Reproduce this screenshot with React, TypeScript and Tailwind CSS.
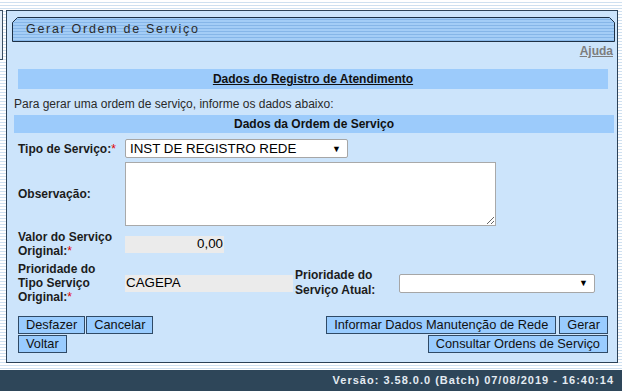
const Req = () => <span className="font-normal text-[#e00000]">*</span>;

const Btn = ({ children }: { children: React.ReactNode }) => (
  <button className="h-[18px] border border-[#2f4a66] bg-[#99ccff] px-[7px] text-[12.8px] leading-[16px] text-[#111]">
    {children}
  </button>
);

function TabTitle({ title }: { title: string }) {
  return (
    <div className="relative ml-[5px] mr-[2px] mt-[6px] h-[25px]">
      <svg className="absolute inset-0" width="603" height="25" viewBox="0 0 603 25">
        <defs>
          <pattern id="tabStripes" width="4" height="3" patternUnits="userSpaceOnUse">
            <rect width="4" height="3" fill="#a4cdf6" />
            <rect y="2" width="4" height="1" fill="#86b6e8" />
          </pattern>
        </defs>
        <polygon
          points="0.5,5.5 5.5,0.5 597.5,0.5 602.5,5.5 602.5,24.5 0.5,24.5"
          fill="url(#tabStripes)"
          stroke="#1d3045"
          strokeWidth="1"
        />
      </svg>
      <span className="relative block pl-[14px] pt-[4px] text-[12.5px] leading-[16px] tracking-[1.7px] text-[#2b2b2b]">
        {title}
      </span>
    </div>
  );
}

export default function App() {
  return (
    <div className="flex h-[391px] w-[622px] flex-col overflow-hidden bg-[repeating-linear-gradient(to_bottom,#ffffff_0px,#ffffff_2px,#cfe0f0_2px,#cfe0f0_3px)] font-['Liberation_Sans',Arial,sans-serif]">
      <div className="flex flex-1 items-start pt-[10px]">
        <div className="h-[50px] w-[3px] border-y border-r border-[#3b4f63] bg-[#e4eef8]" />
        <div className="ml-[3px] flex h-[353px] w-[612px] flex-col border border-[#2c4156] bg-[#cce4fb]">
          <TabTitle title="Gerar Ordem de Serviço" />

          <div className="mt-[2px] pr-[4px] text-right text-[12px] font-bold leading-[14px]">
            <span className="text-[#7d7d7d] underline">Ajuda</span>
          </div>

          <div className="ml-[11px] mr-[9px] mt-[11px] flex h-[20px] items-center justify-center bg-[#9ccbfb] text-[12px] font-bold text-[#111]">
            <span className="underline">Dados do Registro de Atendimento</span>
          </div>

          <p className="ml-[7px] mt-[8px] text-[12px] leading-[14px] text-[#2a2a2a]">
            Para gerar uma ordem de serviço, informe os dados abaixo:
          </p>

          <div className="ml-[7px] mr-[3px] mt-[4px] flex h-[18px] items-center justify-center bg-[#9ccbfb] text-[12px] font-bold text-[#111]">
            Dados da Ordem de Serviço
          </div>

          <div className="flex flex-col gap-[4px] pl-[11px] pt-[6px] text-[12px] font-bold leading-[14px] text-[#1c1c1c]">
            <div className="flex h-[19px] items-center">
              <span className="w-[107px]">
                Tipo de Serviço:<Req />
              </span>
              <div className="flex h-[19px] w-[223px] items-center justify-between rounded-[2px] border border-[#a6a6a6] bg-white pl-[4px] pr-[6px] text-[13.33px] font-normal text-black">
                <span>INST DE REGISTRO REDE</span>
                <span className="text-[9px]">▼</span>
              </div>
            </div>

            <div className="flex h-[64px] items-center">
              <span className="w-[107px]">Observação:</span>
              <textarea
                readOnly
                className="h-[64px] w-[371px] border border-[#a9a9a9] bg-white"
              />
            </div>

            <div className="flex h-[28px] items-center">
              <span className="w-[107px]">
                Valor do Serviço
                <br />
                Original:<Req />
              </span>
              <div className="flex h-[17px] w-[99px] items-center justify-end bg-[#ebebeb] pr-[1px] text-[13.33px] font-normal text-black">
                0,00
              </div>
            </div>

            <div className="flex h-[42px] items-center">
              <span className="w-[107px]">
                Prioridade do
                <br />
                Tipo Serviço
                <br />
                Original:<Req />
              </span>
              <div className="flex h-[17px] w-[168px] items-center bg-[#ebebeb] pl-[1px] text-[13.33px] font-normal text-black">
                CAGEPA
              </div>
              <span className="ml-[2px] w-[104px] leading-[15px]">
                Prioridade do
                <br />
                Serviço Atual:
              </span>
              <div className="flex h-[19px] w-[196px] items-center justify-end rounded-[2px] border border-[#a6a6a6] bg-white pr-[6px] text-[9px] font-normal text-black">
                ▼
              </div>
            </div>
          </div>

          <div className="mt-[12px] flex justify-between pl-[11px] pr-[9px]">
            <div className="flex flex-col gap-[1px]">
              <div className="flex gap-[1px]">
                <Btn>Desfazer</Btn>
                <Btn>Cancelar</Btn>
              </div>
              <div className="flex">
                <Btn>Voltar</Btn>
              </div>
            </div>
            <div className="flex flex-col items-end gap-[1px]">
              <div className="flex gap-[3px]">
                <Btn>Informar Dados Manutenção de Rede</Btn>
                <Btn>Gerar</Btn>
              </div>
              <Btn>Consultar Ordens de Serviço</Btn>
            </div>
          </div>
        </div>
      </div>

      <div className="flex h-[21px] items-center justify-end bg-[#2e4659] pr-[8px] text-[11px] font-bold tracking-[1px] text-[#e4ebf2]">
        Versão: 3.58.0.0 (Batch) 07/08/2019 - 16:40:14
      </div>
    </div>
  );
}
